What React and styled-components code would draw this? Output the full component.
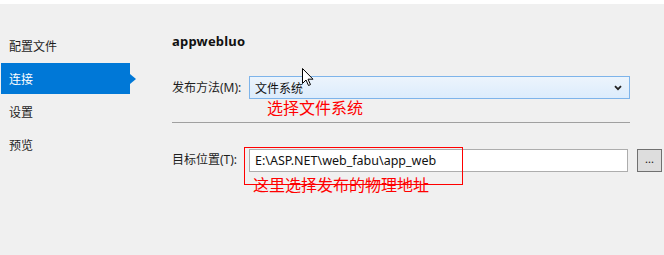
import React from "react";
import styled, { createGlobalStyle } from "styled-components";

const GlobalStyle = createGlobalStyle`
  html, body { margin: 0; padding: 0; background: #f0f0f0; }
  body { font-family: "Noto Sans", "Noto Sans CJK SC", sans-serif; color: #1e1e1e; }
`;

const Page = styled.div`
  width: 664px; height: 255px; box-sizing: border-box; border-top: 4px solid #ffffff;
  display: grid; grid-template-columns: 137px 1fr; position: relative; overflow: hidden;
`;

const Nav = styled.ul`
  list-style: none; margin: 0; padding: 26px 0 0 1px;
  display: flex; flex-direction: column; gap: 2px;
`;

const NavItem = styled.li`
  position: relative; width: 129px; height: 31px; box-sizing: border-box;
  padding-left: 8px; display: flex; align-items: center;
  font-family: "Noto Sans CJK SC", sans-serif; font-size: 12px;
  background: ${p => (p.$active ? "#0078d7" : "transparent")};
  color: ${p => (p.$active ? "#ffffff" : "#1e1e1e")};
  &::after {
    content: ""; display: ${p => (p.$active ? "block" : "none")};
    position: absolute; right: -6px; top: 50%; margin-top: -5px;
    border-left: 6px solid #0078d7; border-top: 5px solid transparent; border-bottom: 5px solid transparent;
  }
`;

const Main = styled.div`
  padding: 28px 0 0 35px; display: flex; flex-direction: column;
`;

const Title = styled.div`
  font-family: "Noto Sans", sans-serif; font-weight: 700; font-size: 13px; line-height: 18px;
  letter-spacing: 0.2px; color: #111;
`;

const Row = styled.div`
  display: flex; align-items: center; margin-top: ${p => p.$top}px;
`;

const Label = styled.label`
  width: 77px; flex: none; font-size: 12px; line-height: 16px; white-space: nowrap;
  font-family: "Noto Sans", "Noto Sans CJK SC", sans-serif; color: #1e1e1e;
`;

const Select = styled.div`
  width: 381px; height: 23px; box-sizing: border-box; border: 1px solid #7eb4ea;
  background: linear-gradient(#ecf4fc, #dcecfc); display: flex; align-items: center;
  justify-content: space-between; padding: 0 7px 0 5px;
  font-family: "Noto Sans CJK SC", sans-serif; font-size: 12px; color: #111;
`;

const Hint = styled.div`
  font-family: "Noto Sans CJK SC", sans-serif; font-size: 16px; line-height: 16px;
  color: #ff0000; margin-left: ${p => p.$left || 0}px; white-space: nowrap;
`;

const Separator = styled.div`
  width: 458px; height: 1px; background: #a0a0a0; margin-top: 7px;
`;

const Field = styled.div`
  position: relative; display: flex; align-items: center;
`;

const Input = styled.div`
  width: 379px; height: 23px; box-sizing: border-box; border: 1px solid #adadad;
  background: #ffffff; padding-left: 5px; display: flex; align-items: center;
  font-family: "Noto Sans", sans-serif; font-size: 12.5px; color: #111;
`;

const Browse = styled.button`
  width: 25px; height: 23px; margin: 1px 0 0 9px; box-sizing: border-box; padding: 0 0 4px;
  border: 1px solid #707070; background: #dddddd; font-family: "Noto Sans", sans-serif;
  font-size: 11px; line-height: 1; color: #111;
`;

const Annotation = styled.div`
  position: absolute; left: -5px; top: -2px; width: 219px; height: 38px;
  box-sizing: border-box; border: 1px solid #ff0000; pointer-events: none;
`;

const AnnotationText = styled(Hint)`
  position: absolute; left: 8px; top: 28px;
`;

const Cursor = styled.svg`
  position: absolute; left: 302px; top: 64px;
`;

const Chevron = () => (
  <svg width="8" height="6" viewBox="0 0 8 6">
    <path d="M1 1.2 L4 4.2 L7 1.2" fill="none" stroke="#222" strokeWidth="1.8" />
  </svg>
);

const navItems = ["配置文件", "连接", "设置", "预览"];

export default function App() {
  return (
    <>
      <GlobalStyle />
      <Page>
        <Nav>
          {navItems.map(n => (
            <NavItem key={n} $active={n === "连接"}>{n}</NavItem>
          ))}
        </Nav>
        <Main>
          <Title>appwebluo</Title>
          <Row $top={26}>
            <Label>发布方法(M):</Label>
            <Select>
              <span>文件系统</span>
              <Chevron />
            </Select>
          </Row>
          <Hint $left={95}>选择文件系统</Hint>
          <Separator />
          <Row $top={25}>
            <Label>目标位置(T):</Label>
            <Field>
              <Input>E:\ASP.NET\web_fabu\app_web</Input>
              <Annotation>
                <AnnotationText>这里选择发布的物理地址</AnnotationText>
              </Annotation>
            </Field>
            <Browse>...</Browse>
          </Row>
        </Main>
        <Cursor width="12" height="19" viewBox="0 0 12 19">
          <path d="M0.5 0.5 L0.5 15.5 L4 12 L6.5 17.5 L8.5 16.6 L6 11.2 L11 11.2 Z" fill="#fff" stroke="#000" strokeWidth="1" />
        </Cursor>
      </Page>
    </>
  );
}
